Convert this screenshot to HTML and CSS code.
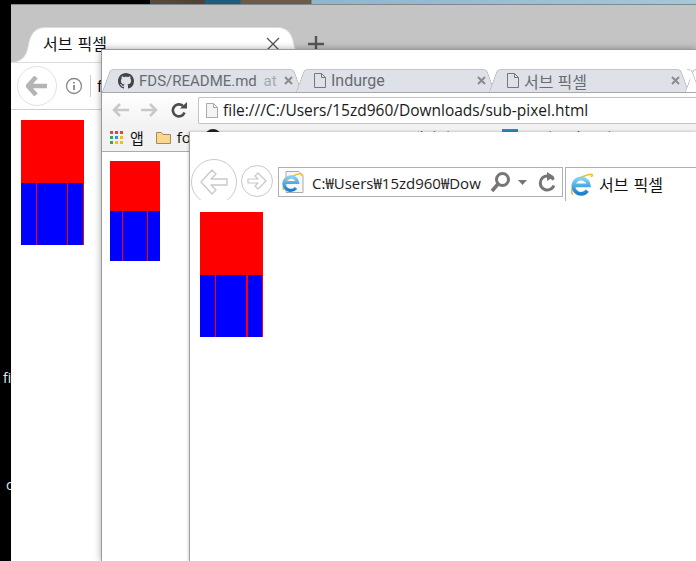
FILE: index.html
```html
<!DOCTYPE html>
<html lang="ko">
<head>
  <meta charset="UTF-8" />
  <title>서브 픽셀</title>
  <link rel="stylesheet" href="styles.css">
</head>
<body>
  <div class="wallpaper"></div>
  <div class="desk-label label-a">file</div>
  <div class="desk-label label-b">c</div>

  <!-- chrome, behind -->
  <section class="win win-back">
    <div class="back-tabs">
      <div class="back-tab">
        <svg class="back-tab-shape" width="300" height="36" viewBox="0 0 300 36"><path d="M0 35.500 C10 35 15 30 17 20 C19 7 24 .5 34 .5 H266 C276 .5 280 6 282 14 C285 28 290 35 300 35.500 Z" fill="#fff" stroke="#dcdcdc"/></svg>
        <span class="back-tab-title">서브 픽셀</span>
        <svg class="back-tab-close" width="14" height="14" viewBox="0 0 14 14"><path d="M1 1 13 13M13 1 1 13" stroke="#555" stroke-width="1.300" fill="none"/></svg>
      </div>
      <svg class="back-plus" width="16" height="16" viewBox="0 0 16 16"><path d="M8 0v16M0 8h16" stroke="#555" stroke-width="2.400"/></svg>
    </div>
    <div class="back-toolbar">
      <div class="round-back">
        <svg width="22" height="20" viewBox="0 0 22 20"><path d="M10 1 2 10l8 9M3 10h18" stroke="#b4b4b4" stroke-width="4.500" fill="none"/></svg>
      </div>
      <svg class="info" width="18" height="18" viewBox="0 0 18 18"><circle cx="9" cy="9" r="7.500" stroke="#8a8a8a" stroke-width="1.300" fill="none"/><path d="M9 8v5M9 5v1.600" stroke="#777" stroke-width="1.600"/></svg>
      <span class="back-sep"></span>
      <span class="back-url">f</span>
    </div>
    <div class="page page-back">
      <div class="blk blk-lg">
        <div class="blk-top"></div>
        <div class="blk-cells">
          <div class="cell w15"></div>
          <div class="cell w30"></div>
          <div class="cell w15"></div>
        </div>
      </div>
    </div>
  </section>

  <!-- chrome, middle -->
  <section class="win win-mid">
    <div class="mid-tabs">
      <div class="mid-tab tab-a">
        <svg class="gh" width="16" height="16" viewBox="0 0 16 16"><path fill="#444" d="M8 0C3.580 0 0 3.580 0 8c0 3.540 2.290 6.530 5.470 7.590.4.070.55-.17.55-.38 0-.19-.01-.82-.01-1.490-2.010.37-2.530-.49-2.690-.94-.09-.23-.48-.94-.82-1.130-.28-.15-.68-.52-.01-.53.63-.01 1.080.58 1.230.82.72 1.210 1.870.87 2.330.66.07-.52.28-.87.51-1.070-1.780-.2-3.640-.89-3.640-3.950 0-.87.31-1.590.82-2.150-.08-.2-.36-1.020.08-2.120 0 0 .67-.21 2.200.82.64-.18 1.320-.27 2-.27.68 0 1.360.09 2 .27 1.530-1.040 2.200-.82 2.200-.82.44 1.100.16 1.920.08 2.120.51.56.82 1.270.82 2.150 0 3.070-1.870 3.750-3.650 3.950.29.25.54.73.54 1.480 0 1.070-.01 1.930-.01 2.200 0 .21.15.46.55.38A8.013 8.013 0 0016 8c0-4.420-3.580-8-8-8z"/></svg>
        <span class="mid-title">FDS/README.md <span class="title-end">at</span></span>
        <svg class="x" width="9" height="9" viewBox="0 0 9 9"><path d="M1 1l7 7M8 1 1 8" stroke="#8b8b8b" stroke-width="2"/></svg>
      </div>
      <div class="mid-tab tab-b">
        <svg class="doc" width="12" height="15" viewBox="0 0 12 15"><path d="M.5.500h7l4 4v10H.5zM7.500.500v4h4" fill="none" stroke="#777"/></svg>
        <span class="mid-title">Indurge</span>
        <svg class="x" width="9" height="9" viewBox="0 0 9 9"><path d="M1 1l7 7M8 1 1 8" stroke="#8b8b8b" stroke-width="2"/></svg>
      </div>
      <div class="mid-tab tab-c">
        <svg class="doc" width="12" height="15" viewBox="0 0 12 15"><path d="M.5.500h7l4 4v10H.5zM7.500.500v4h4" fill="none" stroke="#777"/></svg>
        <span class="mid-title">서브 픽셀</span>
        <svg class="x" width="9" height="9" viewBox="0 0 9 9"><path d="M1 1l7 7M8 1 1 8" stroke="#8b8b8b" stroke-width="2"/></svg>
      </div>
      <div class="mid-tab tab-on"></div>
    </div>
    <div class="mid-toolbar">
      <svg class="nav" width="17" height="14" viewBox="0 0 17 14"><path d="M8 1 2 7l6 6M2 7h15" stroke="#c8c8c8" stroke-width="2.500" fill="none"/></svg>
      <svg class="nav" width="17" height="14" viewBox="0 0 17 14"><path d="M9 1l6 6-6 6M15 7H0" stroke="#c8c8c8" stroke-width="2.500" fill="none"/></svg>
      <svg class="nav-reload" width="16" height="16" viewBox="0 0 16 16"><path d="M13.500 10.500A6 6 0 1 1 12 4" stroke="#4d4d4d" stroke-width="2.600" fill="none"/><path d="M9 6.500h7V0z" fill="#4d4d4d"/></svg>
      <div class="mid-address">
        <svg class="doc-fill" width="12" height="15" viewBox="0 0 12 15"><path d="M.5.500h7l4 4v10H.5z" fill="#f4f4f4" stroke="#aaa"/><path d="M7.500.500v4h4" fill="none" stroke="#aaa"/></svg>
        <span>file:///C:/Users/15zd960/Downloads/sub-pixel.html</span>
      </div>
    </div>
    <div class="mid-marks">
      <svg class="apps" width="13" height="13" viewBox="0 0 13 13">
        <rect width="3" height="3" fill="#ea4335"/><rect x="5" width="3" height="3" fill="#ea4335"/><rect x="10" width="3" height="3" fill="#ea4335"/>
        <rect y="5" width="3" height="3" fill="#34a853"/><rect x="5" y="5" width="3" height="3" fill="#4285f4"/><rect x="10" y="5" width="3" height="3" fill="#fbbc05"/>
        <rect y="10" width="3" height="3" fill="#34a853"/><rect x="5" y="10" width="3" height="3" fill="#fbbc05"/><rect x="10" y="10" width="3" height="3" fill="#fbbc05"/>
      </svg>
      <span class="mark mark-apps">앱</span>
      <svg class="folder" width="15" height="13" viewBox="0 0 15 13"><path d="M.5 12.500v-11h5l1.500 2h7.500v9z" fill="#fbd68f" stroke="#a88a58"/></svg>
      <span class="mark mark-fo">fo</span>
      <span class="dot"></span>
      <span class="mark mark-gh">GitHub</span>
      <span class="mark mark-moz">Mozilla 개발자</span>
      <span class="square"></span>
      <span class="mark">북마크된 북마크</span>
    </div>
    <div class="page page-mid">
      <div class="blk blk-sm">
        <div class="blk-top"></div>
        <div class="blk-cells">
          <div class="cell w12"></div>
          <div class="cell w24"></div>
          <div class="cell w12"></div>
        </div>
      </div>
    </div>
  </section>

  <!-- internet explorer, front -->
  <section class="win win-front">
    <div class="ie-bar">
      <div class="ie-back">
        <svg width="30" height="28" viewBox="0 0 30 28"><path d="M13 2 2 14l11 12 4-4-5-5h16V11H12l5-5z" fill="#fff" stroke="#c9c9c9" stroke-width="1.400" stroke-linejoin="round"/></svg>
      </div>
      <div class="ie-forward">
        <svg width="20" height="18" viewBox="0 0 20 18"><path d="M11 1l8 8-8 8-3-3 3-3H1V7h10L8 4z" fill="#fff" stroke="#c9c9c9" stroke-width="1.200" stroke-linejoin="round"/></svg>
      </div>
      <div class="ie-address">
        <svg class="ie-logo" width="24" height="24" viewBox="0 0 24 24">
          <defs>
            <linearGradient id="ieblue" x1="0" y1="0" x2="0" y2="1">
              <stop offset="0" stop-color="#7fd2f6"/>
              <stop offset="1" stop-color="#1a7fd0"/>
            </linearGradient>
          </defs>
          <path d="M5 1.500h13l4 4v17H5z" fill="#f8f8f8" stroke="#aaa"/>
          <path d="M3 20C0 17 6 9 12 6s11-3 8 0" fill="none" stroke="#f0c030" stroke-width="1.400"/>
          <path d="M3 12.500h13.500A6.800 6.800 0 1 0 15 18" fill="none" stroke="url(#ieblue)" stroke-width="3.200"/>
        </svg>
        <span class="ie-url">C:₩Users₩15zd960₩Dow</span>
        <svg class="ie-search" width="20" height="21" viewBox="0 0 20 21"><circle cx="12.500" cy="7.500" r="6" fill="none" stroke="#767676" stroke-width="3"/><path d="M8 12l-6 7" stroke="#767676" stroke-width="3.600"/></svg>
        <svg class="ie-caret" width="9" height="5" viewBox="0 0 9 5"><path d="M0 0h9L4.500 5z" fill="#767676"/></svg>
        <svg class="ie-reload" width="18" height="20" viewBox="0 0 18 20"><path d="M14.500 6.500A7 7 0 1 0 16 12" transform="rotate(12 9 12)" fill="none" stroke="#767676" stroke-width="3"/><path d="M9 0l7 4.500-7 4.500z" fill="#767676"/></svg>
      </div>
      <div class="ie-tab">
        <svg width="23" height="24" viewBox="0 0 24 24">
          <path d="M2 23C-2 19 5 8 12 4.500s13-3.500 9 0" fill="none" stroke="#f0c030" stroke-width="1.800"/>
          <path d="M1.500 13.500h17A8 8 0 1 0 17 19" fill="none" stroke="url(#ieblue)" stroke-width="4"/>
        </svg>
        <span>서브 픽셀</span>
      </div>
    </div>
    <div class="page page-front">
      <div class="blk blk-lg">
        <div class="blk-top"></div>
        <div class="blk-cells">
          <div class="cell w15"></div>
          <div class="cell w30 wide-gap"></div>
          <div class="cell w14"></div>
        </div>
      </div>
    </div>
  </section>
</body>
</html>
```

FILE: styles.css
```css
html, body {
  margin: 0;
  padding: 0;
}
body {
  width: 696px;
  height: 561px;
  position: relative;
  overflow: hidden;
  background-color: #000;
  font-family: "Open Sans", "Noto Sans CJK KR", sans-serif;
}
svg {
  display: block;
  flex: none;
}

/* desktop */
.wallpaper {
  position: absolute;
  left: 150px;
  right: 0;
  top: 0;
  height: 4px;
  background: linear-gradient(90deg, #5b4c3d 0, #4e4234 54px, #1e5d80 55px, #1e5d80 90px, #6b5a48 91px, #6b5a48 161px, #8db6cf 162px, #a7c6d6 100%);
}
.desk-label {
  position: absolute;
  left: 3px;
  color: #dfeaf5;
  font-size: 14px;
  line-height: 16px;
}
.label-a { top: 370px; }
.label-b { top: 477px; left: 6px; }

/* windows */
.win {
  position: absolute;
  right: 0;
  bottom: 0;
  background-color: #fff;
  display: flex;
  flex-direction: column;
  overflow: hidden;
}
.win-back {
  left: 11px;
  top: 4px;
  border-top: 1px solid #80898e;
}
.win-mid {
  left: 101px;
  top: 49px;
  border-top: 1px solid #9a9a9a;
  border-left: 1px solid #9a9a9a;
  box-shadow: 0 0 7px rgba(0, 0, 0, 0.35);
}
.win-front {
  left: 189px;
  top: 132px;
  border-left: 1px solid #a0a0a0;
  box-shadow: 0 0 3px rgba(0, 0, 0, 0.3);
}

/* back window */
.back-tabs {
  height: 57px;
  background-color: #c4c4c4;
  display: flex;
  align-items: flex-end;
  flex: none;
}
.back-tab {
  width: 284px;
  height: 35px;
  position: relative;
  display: flex;
  align-items: center;
}
.back-tab-shape {
  position: absolute;
  left: 0;
  top: 0;
}
.back-tab-title {
  position: relative;
  margin-left: 32px;
  font-size: 16px;
  word-spacing: 1px;
  color: #111;
  margin-top: -3px;
}
.back-tab-close {
  position: absolute;
  left: 255px;
  top: 10px;
}
.back-plus {
  margin: 0 0 10px 13px;
}
.back-toolbar {
  height: 47px;
  border-bottom: 1px solid #cfcfcf;
  display: flex;
  align-items: center;
  padding-left: 6px;
  flex: none;
}
.round-back {
  width: 38px;
  height: 38px;
  border: 1px solid #e2e2e2;
  border-radius: 50%;
  display: flex;
  align-items: center;
  justify-content: center;
}
.info {
  margin-left: 8px;
}
.back-sep {
  width: 1px;
  height: 22px;
  background-color: #ccc;
  margin-left: 7px;
}
.back-url {
  margin-left: 6px;
  font-size: 16px;
}
.page-back {
  padding: 10px;
}

/* middle window */
.mid-tabs {
  height: 23px;
  margin-top: 19px;
  padding-left: 4px;
  display: flex;
  gap: 2px;
  border-bottom: 1px solid #a8a8a8;
  flex: none;
}
.mid-tab {
  position: relative;
  height: 23px;
  display: flex;
  align-items: center;
  font-size: 16px;
  z-index: 0;
  flex: none;
}
.mid-tab::before,
.mid-tab::after {
  content: "";
  position: absolute;
  top: 0;
  bottom: 0;
  width: 55%;
  background-color: #dee1e7;
  border-top: 1px solid #c2c5ca;
  z-index: -1;
}
.mid-tab::before {
  left: 0;
  border-left: 1px solid #b4b7bc;
  border-top-left-radius: 4px;
  transform: skewX(-20deg);
}
.mid-tab::after {
  right: 0;
  border-right: 1px solid #b4b7bc;
  border-top-right-radius: 4px;
  transform: skewX(20deg);
}
.tab-a { width: 192px; }
.tab-b { width: 191px; }
.tab-c { width: 192px; }
.tab-on {
  flex: 1;
  min-width: 0;
  margin-left: 2px;
}
.tab-on::before,
.tab-on::after {
  background-color: #fff;
}
.gh {
  margin-left: 12px;
  position: relative;
}
.doc {
  margin-left: 14px;
}
.mid-title {
  margin-left: 5px;
  color: #686c73;
  font-family: Roboto, "Noto Sans CJK KR", sans-serif;
  white-space: nowrap;
  flex: 1;
}
.tab-a .mid-title {
  font-size: 15px;
}
.title-end {
  color: #a6a9ae;
  margin-left: 3px;
}
.x {
  margin: 0 5px 0 0;
}
.mid-toolbar {
  height: 26px;
  padding: 4px 0 0 10px;
  background: linear-gradient(#fff, #f4f4f4);
  display: flex;
  align-items: center;
  flex: none;
}
.nav {
  margin-right: 12px;
}
.nav-reload {
  margin-left: 1px;
}
.mid-address {
  flex: 1;
  height: 25px;
  margin-left: 11px;
  background-color: #fff;
  border: 1px solid #c4c4c4;
  border-right: 0;
  border-radius: 2px 0 0 2px;
  display: flex;
  align-items: center;
  gap: 5px;
  padding-left: 7px;
  font-size: 15.500px;
  color: #1a1a1a;
  white-space: nowrap;
  position: relative;
}
.mid-marks {
  height: 29px;
  box-sizing: border-box;
  background-color: #f2f2f2;
  border-bottom: 1px solid #ababab;
  display: flex;
  align-items: center;
  padding-left: 8px;
  font-size: 15px;
  color: #111;
  white-space: nowrap;
  flex: none;
}
.mark-apps { margin: 0 12px 0 7px; }
.mark-fo { margin-left: 6px; width: 28px; }
.dot {
  width: 16px;
  height: 16px;
  border-radius: 50%;
  background-color: #222;
  flex: none;
}
.mark-gh { margin: 0 0 0 5px; width: 131px; }
.mark-moz { width: 145px; }
.square {
  width: 16px;
  height: 16px;
  background-color: #2f86c5;
  margin-right: 8px;
  flex: none;
}
.page-mid {
  padding: 9px 8px;
}

/* front window */
.ie-bar {
  height: 70px;
  position: relative;
  display: flex;
  align-items: flex-start;
  padding-top: 35px;
  box-sizing: border-box;
  flex: none;
}
.ie-back {
  position: absolute;
  left: 1px;
  top: 27px;
  width: 46px;
  height: 46px;
  box-sizing: border-box;
  border: 1px solid #c9c9c9;
  border-radius: 50%;
  background-color: #fff;
  display: flex;
  align-items: center;
  justify-content: center;
  clip-path: inset(0 0 5px 0);
}
.ie-forward {
  width: 32px;
  height: 32px;
  box-sizing: border-box;
  margin: -2px 0 0 51px;
  border: 1px solid #c9c9c9;
  border-radius: 50%;
  display: flex;
  align-items: center;
  justify-content: center;
}
.ie-address {
  width: 285px;
  height: 30px;
  box-sizing: border-box;
  margin-left: 5px;
  border: 1px solid #b0b0b0;
  display: flex;
  align-items: center;
  padding-left: 2px;
  font-size: 15px;
  color: #222;
  white-space: nowrap;
}
.ie-url {
  margin-left: 7px;
  width: 178px;
  overflow: hidden;
}
.ie-search { margin-left: 0; }
.ie-caret { margin-left: 8px; }
.ie-reload { margin-left: 11px; }
.ie-tab {
  flex: 1;
  height: 34px;
  box-sizing: border-box;
  margin-left: 2px;
  border-top: 1px solid #b0b0b0;
  border-left: 1px solid #b0b0b0;
  display: flex;
  align-items: flex-start;
  gap: 5px;
  padding: 4px 0 0 5px;
  font-size: 16px;
  word-spacing: 1px;
  color: #111;
}
.page-front {
  padding: 10px;
}

/* the sub-pixel test boxes */
.blk-top {
  background-color: #f00;
}
.blk-cells {
  display: flex;
  background-color: #f00;
}
.cell {
  background-color: #00f;
  margin-right: 1px;
}
.blk-lg { width: 63px; }
.blk-lg .blk-top { height: 63px; }
.blk-lg .blk-cells { height: 62px; }
.blk-sm { width: 50px; }
.blk-sm .blk-top { height: 50px; }
.blk-sm .blk-cells { height: 50px; }
.blk-sm .cell:last-child { margin-right: 0; }
.w12 { width: 12px; }
.w14 { width: 14px; }
.w15 { width: 15px; }
.w24 { width: 24px; }
.w30 { width: 30px; }
.wide-gap { margin-right: 2px; }
```
